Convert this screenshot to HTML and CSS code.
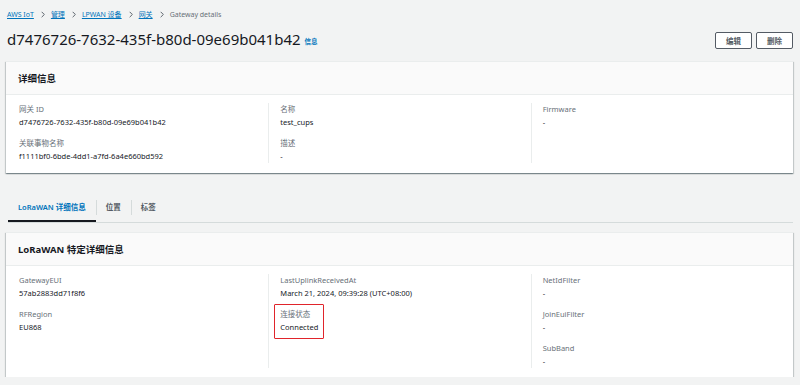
FILE: index.html
```html
<!DOCTYPE html>
<html lang="zh">
<head>
    <meta charset="UTF-8">
    <title>Gateway details</title>
    <link rel="stylesheet" href="styles.css">
</head>
<body>

    <nav class="crumbs">
        <a href="#">AWS IoT</a>
        <svg class="chev" viewBox="0 0 6 10"><polyline points="1,1 5,5 1,9" /></svg>
        <a href="#">管理</a>
        <svg class="chev" viewBox="0 0 6 10"><polyline points="1,1 5,5 1,9" /></svg>
        <a href="#">LPWAN 设备</a>
        <svg class="chev" viewBox="0 0 6 10"><polyline points="1,1 5,5 1,9" /></svg>
        <a href="#">网关</a>
        <svg class="chev" viewBox="0 0 6 10"><polyline points="1,1 5,5 1,9" /></svg>
        <span class="crumb-current">Gateway details</span>
    </nav>

    <div class="page-head">
        <h1 class="page-title">d7476726-7632-435f-b80d-09e69b041b42 <a class="info" href="#">信息</a></h1>
        <div class="actions">
            <button class="btn">编辑</button>
            <button class="btn">删除</button>
        </div>
    </div>

    <section class="card">
        <h2 class="card-title">详细信息</h2>
        <div class="card-body">
            <div class="col">
                <div class="field">
                    <div class="label">网关 ID</div>
                    <div class="value">d7476726-7632-435f-b80d-09e69b041b42</div>
                </div>
                <div class="field">
                    <div class="label">关联事物名称</div>
                    <div class="value">f1111bf0-6bde-4dd1-a7fd-6a4e660bd592</div>
                </div>
            </div>
            <div class="col">
                <div class="field">
                    <div class="label">名称</div>
                    <div class="value">test_cups</div>
                </div>
                <div class="field">
                    <div class="label">描述</div>
                    <div class="value">-</div>
                </div>
            </div>
            <div class="col">
                <div class="field">
                    <div class="label">Firmware</div>
                    <div class="value">-</div>
                </div>
            </div>
        </div>
    </section>

    <ul class="tabs">
        <li class="tab tab-active">LoRaWAN 详细信息</li>
        <li class="tab">位置</li>
        <li class="tab">标签</li>
    </ul>

    <section class="card card-lora">
        <h2 class="card-title">LoRaWAN 特定详细信息</h2>
        <div class="card-body">
            <div class="col">
                <div class="field">
                    <div class="label">GatewayEUI</div>
                    <div class="value">57ab2883dd71f8f6</div>
                </div>
                <div class="field">
                    <div class="label">RFRegion</div>
                    <div class="value">EU868</div>
                </div>
            </div>
            <div class="col">
                <div class="field">
                    <div class="label">LastUplinkReceivedAt</div>
                    <div class="value">March 21, 2024, 09:39:28 (UTC+08:00)</div>
                </div>
                <div class="field field-marked">
                    <div class="label">连接状态</div>
                    <div class="value">Connected</div>
                </div>
            </div>
            <div class="col">
                <div class="field">
                    <div class="label">NetIdFilter</div>
                    <div class="value">-</div>
                </div>
                <div class="field">
                    <div class="label">JoinEuiFilter</div>
                    <div class="value">-</div>
                </div>
                <div class="field">
                    <div class="label">SubBand</div>
                    <div class="value">-</div>
                </div>
            </div>
        </div>
    </section>

</body>
</html>
```

FILE: styles.css
```css
body {
    margin: 0;
    padding: 0 7px 0 6px;
    background: #f2f3f3;
    color: #16191f;
    font-family: "Noto Sans", "Noto Sans CJK SC", sans-serif;
    font-size: 7.5px;
    line-height: 13px;
}
a {
    color: #0073bb;
    text-decoration: none;
}
.crumbs {
    height: 28px;
    display: flex;
    align-items: center;
    padding-left: 1px;
    font-size: 7px;
}
.crumbs a {
    text-decoration: underline;
    text-underline-offset: 1px;
}
.chev {
    width: 4px;
    height: 7px;
    margin: 0 6px 0 7px;
    fill: none;
    stroke: #545b64;
    stroke-width: 1.4;
}
.crumb-current {
    color: #687078;
}
.page-head {
    display: flex;
    align-items: center;
    justify-content: space-between;
    height: 24px;
}
.page-title {
    margin: 0 0 0 1px;
    font-size: 15px;
    font-weight: 400;
    line-height: 20px;
}
.info {
    font-size: 6.5px;
    font-weight: 700;
    vertical-align: 1px;
}
.actions {
    display: flex;
    gap: 4px;
}
.btn {
    width: 37px;
    height: 17px;
    padding: 0;
    border: 1px solid #545b64;
    border-radius: 2px;
    background: #fff;
    color: #545b64;
    font-family: inherit;
    font-size: 7.5px;
    font-weight: 700;
}
.card {
    margin-top: 9px;
    background: #fff;
    box-shadow: 0 1px 1px 0 rgba(0, 28, 36, .3), 1px 1px 1px 0 rgba(0, 28, 36, .15), -1px 1px 1px 0 rgba(0, 28, 36, .15);
    border-top: 1px solid #eaeded;
}
.card-title {
    margin: 0;
    height: 32px;
    padding: 0 12px;
    display: flex;
    align-items: center;
    background: #fafafa;
    border-bottom: 1px solid #eaeded;
    font-size: 9.5px;
    font-weight: 700;
}
.card-body {
    display: grid;
    grid-template-columns: 1fr 1fr 1fr;
    padding: 8px 0 10px;
}
.col {
    display: flex;
    flex-direction: column;
    gap: 8px;
    padding-left: 11px;
    border-left: 1px solid #eaeded;
}
.col:first-child {
    padding-left: 12px;
    border-left: 1px solid transparent;
}
.label {
    color: #687078;
}
.field-marked {
    position: relative;
    align-self: flex-start;
}
.field-marked::after {
    content: "";
    position: absolute;
    top: -4px;
    left: -6px;
    right: -6px;
    bottom: -5px;
    border: 1.5px solid #e0242b;
    border-radius: 1px;
}
.tabs {
    list-style: none;
    margin: 20px 0 0 2px;
    padding: 0;
    display: flex;
    height: 29px;
    border-bottom: 1px solid #d5dbdb;
}
.tab {
    position: relative;
    display: flex;
    align-items: center;
    padding: 0 10px;
    color: #545b64;
    font-weight: 600;
}
.tab + .tab::before {
    content: "";
    position: absolute;
    left: 0;
    top: 7px;
    height: 15px;
    border-left: 1px solid #d5dbdb;
}
.tab-active {
    padding: 0 10px;
    color: #0073bb;
    box-shadow: inset 0 -2px 0 #16191f;
}
.card-lora {
    margin-top: 9px;
}
.card-lora .card-body {
    padding-bottom: 9px;
}
```
